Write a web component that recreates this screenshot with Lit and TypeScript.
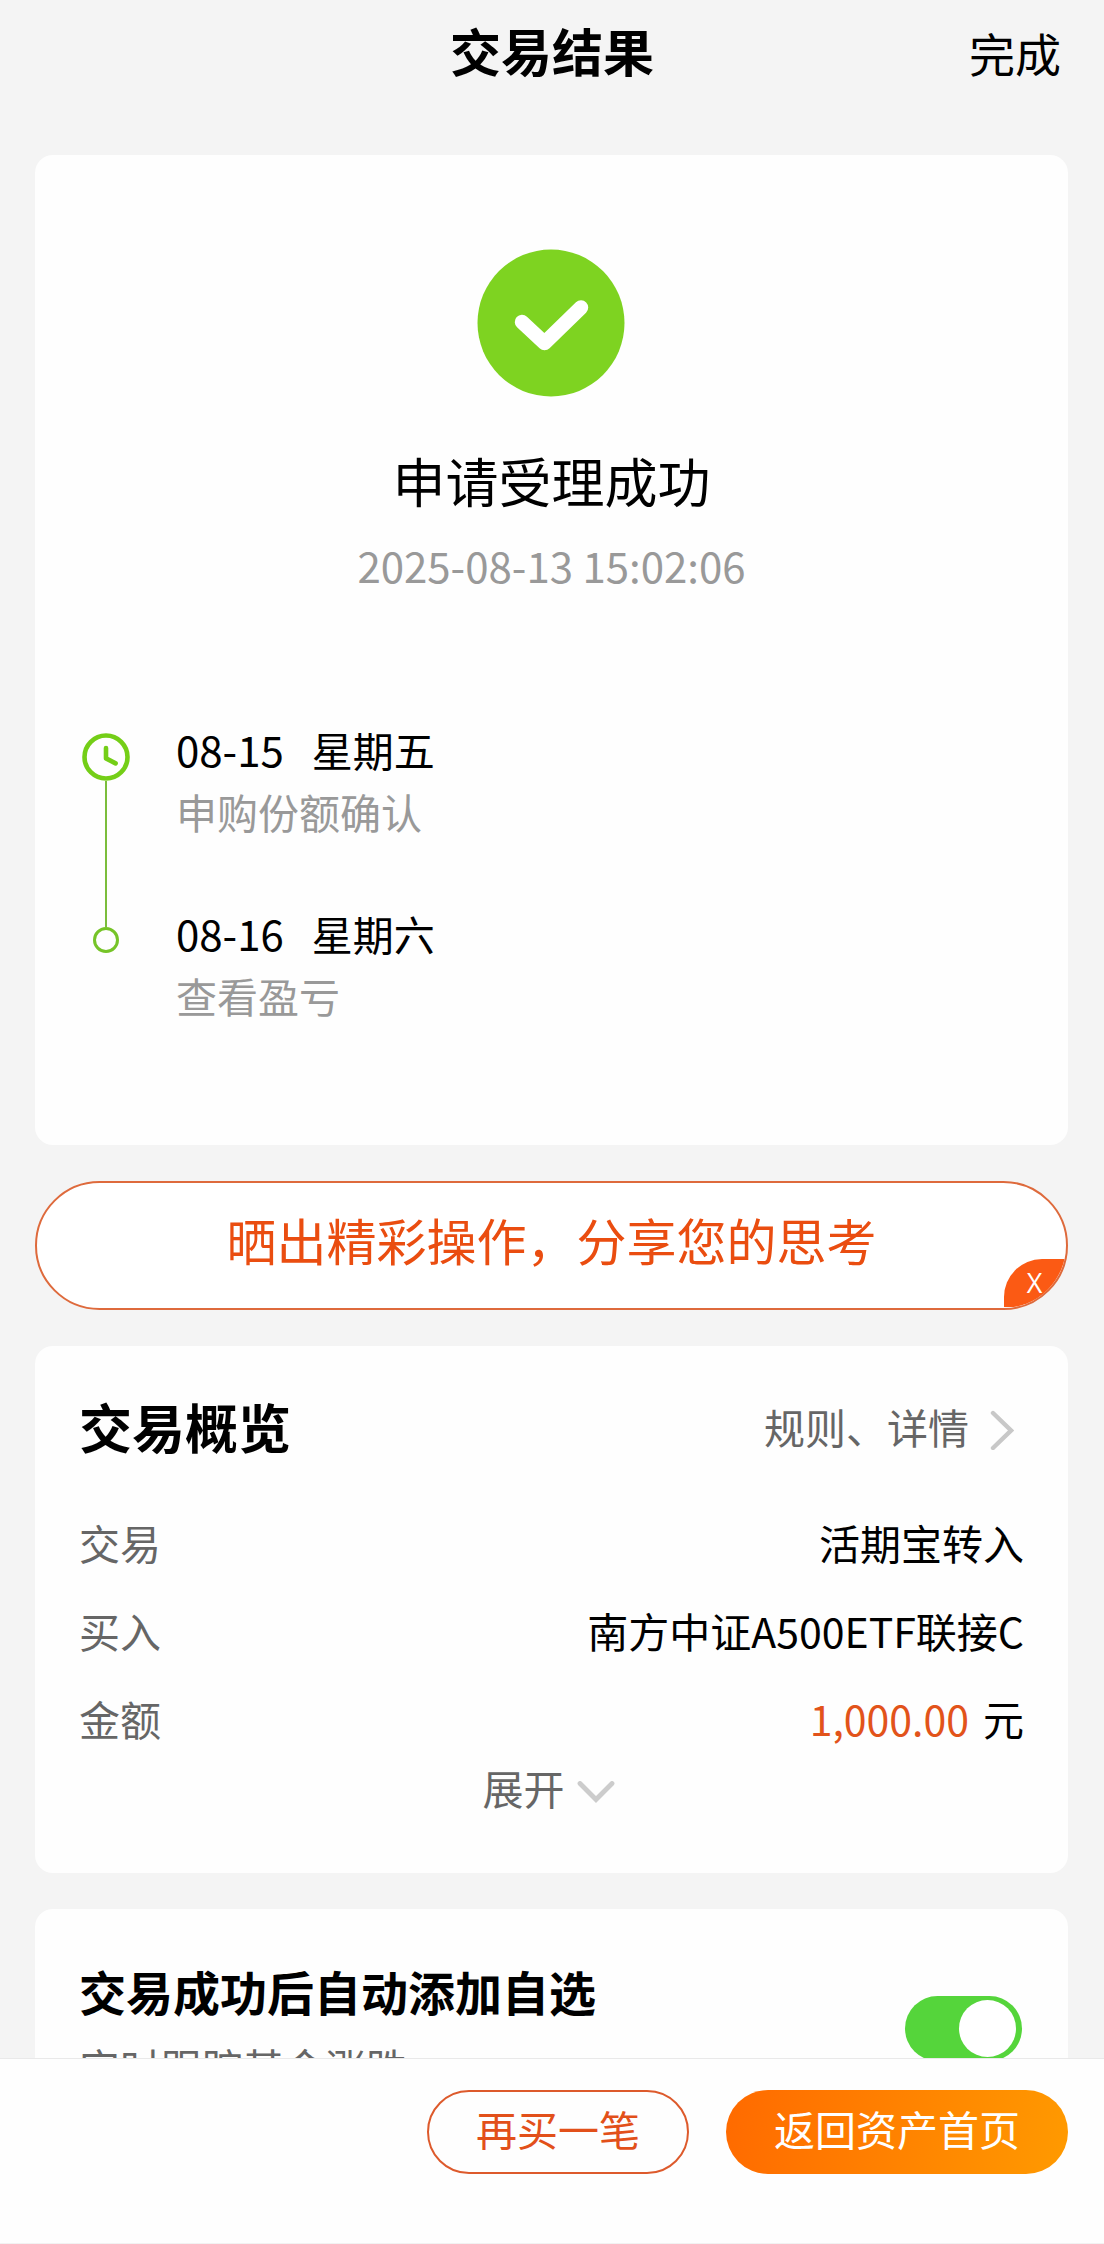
import { LitElement, html, css, svg } from "lit";
import { customElement, property, state } from "lit/decorators.js";

interface Step {
  date: string;
  weekday: string;
  note: string;
}

const STEPS: Step[] = [
  { date: "08-15", weekday: "星期五", note: "申购份额确认" },
  { date: "08-16", weekday: "星期六", note: "查看盈亏" },
];

const clockIcon = svg`
  <circle cx="24" cy="24" r="21.5" fill="none" stroke="#74ce17" stroke-width="4.6" />
  <path d="M24 15v10.4l9.6 5" fill="none" stroke="#74ce17" stroke-width="4.6"
    stroke-linecap="round" stroke-linejoin="round" />`;

@customElement("step-list")
export class StepList extends LitElement {
  @property({ attribute: false }) steps: Step[] = [];

  static styles = css`
    :host {
      display: block;
    }
    .list {
      margin: 0;
      padding: 0;
      list-style: none;
    }
    .item {
      display: flex;
      gap: 43px;
    }
    .rail {
      display: flex;
      flex-direction: column;
      align-items: center;
      width: 54px;
    }
    .clock {
      display: block;
      flex: none;
      width: 48px;
      height: 48px;
      margin-top: 15px;
    }
    .lead {
      width: 2px;
      height: 25px;
      background: #7bbd3c;
    }
    .dot {
      box-sizing: border-box;
      width: 26px;
      height: 26px;
      border: 3px solid #76c428;
      border-radius: 50%;
    }
    .line {
      flex: 1;
      width: 2px;
      background: #7bbd3c;
    }
    .text {
      padding-bottom: 60px;
      font-size: 41px;
      line-height: 62px;
    }
    .item:last-child .text {
      padding-bottom: 0;
    }
    .day {
      display: flex;
      gap: 28px;
      margin: 0;
      color: #000;
    }
    .date {
      font-size: 42px;
    }
    .note {
      margin: 0;
      color: #999;
    }
  `;

  render() {
    const last = this.steps.length - 1;
    return html`<ol class="list">
      ${this.steps.map(
        (s, i) => html`<li class="item">
          <div class="rail">
            ${i === 0
              ? html`<svg class="clock" viewBox="0 0 48 48" aria-hidden="true">${clockIcon}</svg>`
              : html`<span class="lead"></span><span class="dot"></span>`}
            ${i < last ? html`<span class="line"></span>` : null}
          </div>
          <div class="text">
            <p class="day"><span class="date">${s.date}</span><span>${s.weekday}</span></p>
            <p class="note">${s.note}</p>
          </div>
        </li>`
      )}
    </ol>`;
  }
}

@customElement("app-root")
export class AppRoot extends LitElement {
  @state() private shareOpen = true;
  @state() private autoAdd = true;

  static styles = css`
    :host {
      display: flex;
      flex-direction: column;
      height: 100vh;
      background: #f4f4f4;
      color: #000;
      font-family: "Noto Sans CJK SC", "Noto Sans", sans-serif;
      font-size: 41px;
    }
    button {
      margin: 0;
      padding: 0;
      border: 0;
      background: none;
      color: inherit;
      font: inherit;
      cursor: pointer;
    }
    h1,
    h2,
    p,
    dl,
    dd {
      margin: 0;
    }
    .top {
      display: grid;
      grid-template-columns: 1fr auto 1fr;
      align-items: start;
      flex: none;
      padding: 14px 43px 0;
      line-height: 72px;
    }
    .title {
      grid-column: 2;
      font-size: 51px;
      font-weight: 700;
    }
    .done {
      justify-self: end;
      font-size: 46px;
      line-height: 76px;
    }
    .scroll {
      display: flex;
      flex: 1;
      flex-direction: column;
      gap: 36px;
      min-height: 0;
      padding: 65px 36px 0 35px;
      overflow-y: auto;
      scrollbar-width: none;
    }
    .card {
      flex: none;
      padding: 44px;
      border-radius: 18px;
      background: #fefefe;
    }
    .result {
      padding-top: 94px;
      padding-bottom: 119px;
    }
    .status {
      display: flex;
      flex-direction: column;
      align-items: center;
      margin-bottom: 125px;
    }
    .tick {
      width: 150px;
      height: 148px;
      margin-bottom: 47px;
    }
    .headline {
      font-size: 53px;
      font-weight: 400;
      line-height: 72px;
    }
    .time {
      margin-top: 21px;
      color: #999;
      font-size: 42px;
      line-height: 56px;
    }
    .share {
      position: relative;
      display: flex;
      flex: none;
      height: 125px;
      border: 2px solid #de6a3c;
      border-radius: 65px;
      background: #fff;
      overflow: hidden;
    }
    .share-link {
      flex: 1;
      padding-bottom: 14px;
      color: #ea4d10;
      font-size: 50px;
    }
    .close {
      position: absolute;
      right: 0;
      bottom: 1px;
      width: 62px;
      height: 48px;
      padding-right: 1px;
      border-top-left-radius: 38px;
      background: #fb5a14;
      color: #fff;
      font-family: "Open Sans", "Noto Sans", sans-serif;
      font-size: 27px;
      line-height: 46px;
    }
    .overview {
      padding-top: 42px;
      padding-bottom: 61px;
    }
    .bar {
      display: flex;
      align-items: center;
      justify-content: space-between;
      margin-bottom: 34px;
    }
    .section {
      font-size: 53px;
      font-weight: 700;
      line-height: 76px;
    }
    .more {
      display: flex;
      align-items: center;
      gap: 21px;
      margin-right: 10px;
      color: #666;
      line-height: 76px;
      text-decoration: none;
    }
    .chevron-right {
      width: 24px;
      height: 40px;
      margin-top: 8px;
    }
    .row {
      display: flex;
      justify-content: space-between;
      line-height: 88px;
    }
    .label {
      color: #666;
    }
    .amount {
      margin-right: 14px;
      color: #e2531a;
    }
    .expand {
      display: flex;
      align-items: center;
      gap: 12px;
      margin: 0 auto;
      padding-right: 6px;
      color: #666;
      line-height: 50px;
    }
    .chevron-down {
      width: 38px;
      height: 22px;
      margin-top: 10px;
    }
    .auto {
      display: flex;
      align-items: center;
      justify-content: space-between;
      padding-right: 46px;
    }
    .auto-title {
      display: block;
      font-size: 47px;
      font-weight: 700;
      line-height: 76px;
    }
    .auto-note {
      color: #666;
      line-height: 74px;
    }
    .switch {
      display: flex;
      box-sizing: border-box;
      flex: none;
      width: 117px;
      height: 65px;
      margin: 0;
      padding: 4px 6px;
      border-radius: 33px;
      background: #ccc;
      appearance: none;
      cursor: pointer;
    }
    .switch::before {
      width: 57px;
      height: 57px;
      border-radius: 50%;
      background: #fff;
      content: "";
    }
    .switch:checked {
      justify-content: flex-end;
      background: #55d53b;
    }
    .actions {
      display: flex;
      flex: none;
      justify-content: flex-end;
      gap: 37px;
      padding: 31px 36px 69px;
      border-top: 1px solid #e9e9e9;
      border-bottom: 1px solid #f2f2f2;
      background: #fefefe;
    }
    .action {
      box-sizing: border-box;
      height: 84px;
      padding: 0 48px 9px;
      border-radius: 42px;
    }
    .again {
      padding: 0 47px 9px;
      border: 2px solid #dd5a2c;
      color: #e2501a;
    }
    .home {
      background: linear-gradient(100deg, #ff6a00, #ff9a00);
      color: #fff;
    }
  `;

  render() {
    return html`
      <header class="top">
        <h1 class="title">交易结果</h1>
        <button class="done" type="button">完成</button>
      </header>
      <main class="scroll">
        <section class="card result">
          <div class="status">
            <svg class="tick" viewBox="0 0 150 148" aria-hidden="true">
              <circle cx="74" cy="74" r="73.5" fill="#7ed321" />
              <path d="M45 73 67.500 94 104 58.500" fill="none" stroke="#fff" stroke-width="14.5"
                stroke-linecap="round" stroke-linejoin="round" />
            </svg>
            <h2 class="headline">申请受理成功</h2>
            <p class="time">2025-08-13 15:02:06</p>
          </div>
          <step-list .steps=${STEPS}></step-list>
        </section>

        ${this.shareOpen
          ? html`<div class="share">
              <button class="share-link" type="button">晒出精彩操作，分享您的思考</button>
              <button class="close" type="button" @click=${() => (this.shareOpen = false)}>X</button>
            </div>`
          : null}

        <section class="card overview">
          <div class="bar">
            <h2 class="section">交易概览</h2>
            <a class="more" href="#detail">规则、详情
              <svg class="chevron-right" viewBox="0 0 24 40" aria-hidden="true">
                <path d="M3 3 21 20.500 3 38" fill="none" stroke="#c8c8c8" stroke-width="4.400"
                  stroke-linecap="round" stroke-linejoin="miter" />
              </svg>
            </a>
          </div>
          <dl>
            <div class="row"><dt class="label">交易</dt><dd>活期宝转入</dd></div>
            <div class="row"><dt class="label">买入</dt><dd>南方中证A500ETF联接C</dd></div>
            <div class="row">
              <dt class="label">金额</dt>
              <dd><span class="amount">1,000.00</span>元</dd>
            </div>
          </dl>
          <button class="expand" type="button">展开
            <svg class="chevron-down" viewBox="0 0 38 22" aria-hidden="true">
              <path d="M3 2.500 19 18.500 35 2.500" fill="none" stroke="#ccc" stroke-width="4.800"
                stroke-linecap="round" stroke-linejoin="miter" />
            </svg>
          </button>
        </section>

        <section class="card auto">
          <div>
            <label class="auto-title" for="auto-add">交易成功后自动添加自选</label>
            <p class="auto-note">实时跟踪基金涨跌</p>
          </div>
          <input
            class="switch"
            id="auto-add"
            type="checkbox"
            role="switch"
            .checked=${this.autoAdd}
            @change=${(e: Event) => (this.autoAdd = (e.target as HTMLInputElement).checked)}
          />
        </section>
      </main>
      <footer class="actions">
        <button class="action again" type="button">再买一笔</button>
        <button class="action home" type="button">返回资产首页</button>
      </footer>
    `;
  }
}
